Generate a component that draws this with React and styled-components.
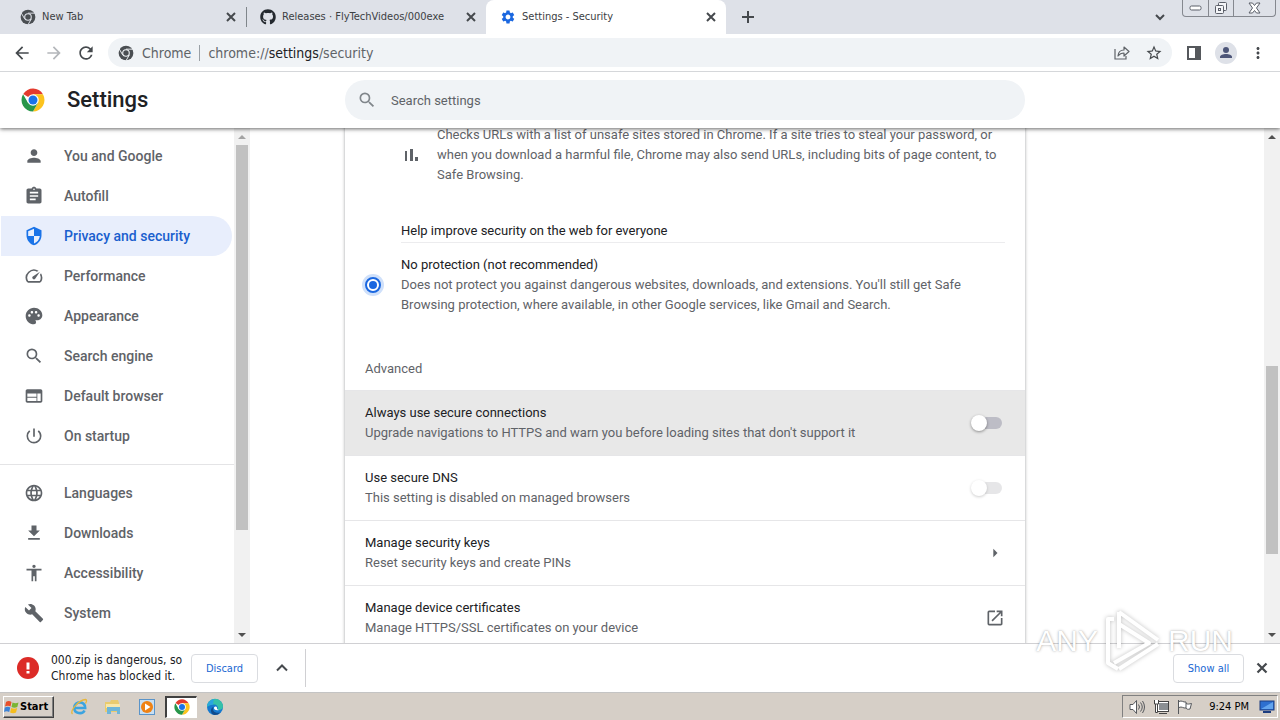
import React from "react";
import styled, { createGlobalStyle, css } from "styled-components";
import {
  MdPerson,
  MdAssignment,
  MdSecurity,
  MdSpeed,
  MdPalette,
  MdSearch,
  MdWeb,
  MdPowerSettingsNew,
  MdLanguage,
  MdFileDownload,
  MdAccessibility,
  MdBuild,
  MdOpenInNew,
  MdArrowRight,
  MdArrowBack,
  MdArrowForward,
  MdRefresh,
  MdMoreVert,
  MdStarBorder,
  MdSettings,
} from "react-icons/md";
import { FaGithub } from "react-icons/fa";

const systemFont = `"DejaVu Sans Condensed", "DejaVu Sans", sans-serif`;

const GlobalStyle = createGlobalStyle`
  * {
    box-sizing: border-box;
  }
  body {
    margin: 0;
    background: #fff;
    font-family: Roboto, "Liberation Sans", sans-serif;
    font-size: 13px;
    line-height: 20px;
    color: #202124;
  }
  button,
  input {
    font-family: inherit;
    margin: 0;
  }
  svg {
    display: block;
    flex-shrink: 0;
  }
`;

const Desktop = styled.div`
  height: 100vh;
  display: flex;
  flex-direction: column;
  overflow: hidden;
  position: relative;
`;

/* tab strip */
const TabStrip = styled.div`
  height: 34px;
  flex-shrink: 0;
  display: flex;
  align-items: center;
  padding-left: 6px;
  background: #dee1e8;
  font-family: ${systemFont};
  font-size: 11px;
  color: #3c4043;
`;
const Tab = styled.div`
  width: 240px;
  height: 34px;
  display: flex;
  align-items: center;
  gap: 6px;
  padding: 0 7px 0 14px;
  background: ${({ $active }) => ($active ? "#fff" : "transparent")};
  border-radius: 8px 8px 0 0;
`;
const TabTitle = styled.span`
  flex: 1;
  white-space: nowrap;
`;
const TabDivider = styled.div`
  width: 1px;
  height: 20px;
  margin-right: -1px;
  background: #80868b;
`;
const IconButton = styled.button`
  width: ${({ $size }) => $size || 16}px;
  height: ${({ $size }) => $size || 16}px;
  flex-shrink: 0;
  display: flex;
  align-items: center;
  justify-content: center;
  padding: 0;
  border: 0;
  background: transparent;
  color: ${({ $color }) => $color || "#45494d"};
`;
const NewTab = styled(IconButton)`
  margin-left: 12px;
`;
const TabSearch = styled(IconButton)`
  margin-left: auto;
  margin-right: 14px;
`;
const WindowControls = styled.div`
  align-self: flex-start;
  display: flex;
  height: 17px;
  margin-right: 4px;
  border: 1px solid #85888f;
  border-top: 0;
  border-radius: 0 0 4px 4px;
`;
const WindowButton = styled.button`
  width: ${({ $wide }) => ($wide ? 42 : 25)}px;
  display: flex;
  align-items: center;
  justify-content: center;
  padding: 0;
  border: 0;
  border-left: ${({ $first }) => ($first ? "0" : "1px solid #85888f")};
  background: transparent;
`;

/* toolbar */
const Toolbar = styled.div`
  height: 38px;
  flex-shrink: 0;
  display: flex;
  align-items: center;
  padding: 0 12px;
  border-bottom: 1px solid #d5d7da;
  font-family: ${systemFont};
`;
const NavButtons = styled.div`
  display: flex;
  gap: 12px;
  margin-right: 12px;
`;
const Omnibox = styled.div`
  flex: 1;
  height: 29px;
  display: flex;
  align-items: center;
  padding: 0 8px 0 10px;
  border-radius: 15px;
  background: #f0f3f6;
  font-size: 14px;
  color: #5f6368;
`;
const SiteChip = styled.span`
  margin-left: 8px;
  padding-right: 8px;
  line-height: 16px;
  border-right: 1px solid #9aa0a6;
`;
const Address = styled.span`
  flex: 1;
  margin-left: 8px;
  b {
    font-weight: 400;
    color: #202124;
  }
`;
const OmniActions = styled.div`
  display: flex;
  gap: 12px;
`;
const ToolbarActions = styled.div`
  display: flex;
  gap: 12px;
  margin-left: 12px;
`;

/* settings page */
const Header = styled.header`
  height: 56px;
  flex-shrink: 0;
  display: flex;
  align-items: center;
  position: relative;
  z-index: 1;
  background: #fff;
  box-shadow: 0 1px 4px rgba(0, 0, 0, 0.6);
  clip-path: inset(0 0 -8px 0);
`;
const Brand = styled.div`
  width: 345px;
  flex-shrink: 0;
  display: flex;
  align-items: center;
  gap: 22px;
  padding-left: 21px;
`;
const PageTitle = styled.h1`
  margin: 0;
  font-size: 22px;
  font-weight: 500;
`;
const SearchBox = styled.label`
  width: 680px;
  height: 40px;
  display: flex;
  align-items: center;
  gap: 14px;
  padding: 0 12px;
  border-radius: 20px;
  background: #f0f3f6;
  color: #80868b;
`;
const SearchInput = styled.input`
  flex: 1;
  padding: 0;
  border: 0;
  background: transparent;
  font-size: 13px;
  &::placeholder {
    color: #5f6368;
  }
`;
const Page = styled.div`
  flex: 1;
  min-height: 0;
  display: flex;
`;
const Sidebar = styled.nav`
  width: 234px;
  flex-shrink: 0;
  padding: 8px 0;
  overflow: hidden;
`;
const MenuLink = styled.a`
  height: 40px;
  display: flex;
  align-items: center;
  gap: 20px;
  margin: 0 2px 0 1px;
  padding-left: 23px;
  border-radius: 0 20px 20px 0;
  font-size: 14px;
  font-weight: 500;
  text-decoration: none;
  color: #5f6368;
  ${({ $selected }) =>
    $selected &&
    css`
      background: #e8eefc;
      color: #1a5fce;
      svg {
        color: #1a73e8;
      }
    `}
`;
const MenuSeparator = styled.div`
  height: 1px;
  margin: 8px 0;
  background: #e4e4e6;
`;
const ScrollColumn = styled.div`
  width: 16px;
  flex-shrink: 0;
  display: flex;
  flex-direction: column;
  align-items: center;
  background: #f1f1f1;
`;
const ScrollArrow = styled.div`
  height: 17px;
  flex-shrink: 0;
  display: flex;
  align-items: center;
`;
const ScrollTrack = styled.div`
  width: 12px;
  flex: 1;
`;
const ScrollThumb = styled.div`
  background: #c1c1c1;
`;
const Main = styled.main`
  flex: 1;
  overflow: hidden;
  padding-left: 95px;
`;
/* the list is scrolled, its top lies under the header */
const Card = styled.section`
  max-width: 680px;
  margin-top: -16px;
  padding-top: 13px;
  box-shadow: 0 0 3px rgba(60, 64, 67, 0.5);
`;
const Muted = styled.p`
  margin: 0;
  color: #5f6368;
`;
const Strong = styled.h3`
  margin: 0;
  font-size: 13px;
  font-weight: 400;
  color: #202124;
`;
const Bullet = styled.div`
  display: flex;
  align-items: center;
  gap: 16px;
  padding: 0 20px 0 56px;
  color: #5f6368;
`;
const HelpImprove = styled.div`
  margin: 36px 20px 0 56px;
  padding-bottom: 1px;
  border-bottom: 1px solid #ececee;
`;
const RadioOption = styled.label`
  display: flex;
  align-items: center;
  gap: 20px;
  margin: 12px 20px 0;
`;
const Radio = styled.input`
  appearance: none;
  width: 16px;
  height: 16px;
  flex-shrink: 0;
  border: 2px solid #1a67e0;
  border-radius: 50%;
  background: #1a67e0;
  background-clip: content-box;
  padding: 2px;
  box-shadow: 0 0 0 3px #cfe0fa;
`;
const SectionTitle = styled.h2`
  margin: 0;
  padding: 44px 20px 11px;
  font-size: 13px;
  font-weight: 400;
  color: #5f6368;
`;
const SettingRow = styled.div`
  min-height: 65px;
  display: flex;
  align-items: center;
  justify-content: space-between;
  padding: 0 20px;
  border-top: 1px solid #e6e6e8;
  background: ${({ $hovered }) => ($hovered ? "#e8e8e8" : "transparent")};
`;
const Toggle = styled.input`
  appearance: none;
  position: relative;
  width: 32px;
  height: 16px;
  margin-right: 3px;
  opacity: ${({ disabled }) => (disabled ? 0.5 : 1)};
  &::before {
    content: "";
    position: absolute;
    inset: 2px 0 2px 4px;
    border-radius: 6px;
    background: ${({ disabled }) => (disabled ? "#cfcfd2" : "#bdbdc6")};
  }
  &::after {
    content: "";
    position: absolute;
    inset: 0 15px 0 1px;
    border-radius: 50%;
    background: #fff;
    box-shadow: 0 1px 3px rgba(0, 0, 0, 0.4);
  }
`;

/* download shelf */
const Shelf = styled.div`
  height: 50px;
  flex-shrink: 0;
  display: flex;
  align-items: center;
  padding: 0 10px 0 17px;
  border-top: 1px solid #d0d0d3;
  border-bottom: 1px solid #c4c4c4;
  background: #fff;
  font-family: ${systemFont};
  font-size: 12px;
  line-height: 16px;
`;
const DangerText = styled.div`
  width: 132px;
  margin: 0 8px 0 12px;
  white-space: nowrap;
`;
const ShelfButton = styled.button`
  width: ${({ $wide }) => ($wide ? 71 : 67)}px;
  height: 29px;
  padding: 0;
  border: 1px solid #dadce0;
  border-radius: 4px;
  background: #fff;
  font-size: 11px;
  color: #1a67d2;
`;
const ShelfMenu = styled(IconButton)`
  margin: 0 15px 0 16px;
`;
const ShelfDivider = styled.div`
  width: 1px;
  height: 38px;
  margin-right: auto;
  background: #d0d0d3;
`;
const ShelfClose = styled(IconButton)`
  margin-left: 10px;
`;

/* taskbar */
const Taskbar = styled.div`
  height: 27px;
  flex-shrink: 0;
  display: flex;
  align-items: center;
  padding: 0 2px 0 3px;
  background: #d6cfc7;
  font-family: ${systemFont};
`;
const StartButton = styled.button`
  width: 51px;
  height: 22px;
  display: flex;
  align-items: center;
  padding: 0;
  border: 1px solid;
  border-color: #fff #404040 #404040 #fff;
  box-shadow: inset -1px -1px 0 #808080;
  background: #d6cfc7;
  font-size: 11px;
  font-weight: 700;
  color: #000;
`;
const QuickLaunch = styled.div`
  display: flex;
  align-items: center;
  margin-left: 8px;
`;
const TaskButton = styled.button`
  width: 34px;
  height: 22px;
  display: flex;
  align-items: center;
  justify-content: center;
  padding: 0;
  border: 1px solid transparent;
  background: transparent;
  ${({ $active }) =>
    $active &&
    css`
      width: 32px;
      margin: 0 1px;
      border-width: 2px 1px 1px 2px;
      border-color: #404040 #fff #fff #404040;
      background: #fff;
    `}
`;
const Tray = styled.div`
  height: 23px;
  display: flex;
  align-items: center;
  gap: 8px;
  margin-left: auto;
  padding: 0 2px 0 6px;
  border: 1px solid;
  border-color: #808080 #fff #fff #808080;
  font-size: 11px;
  color: #000;
`;
const Clock = styled.span`
  margin: 0 2px 0 8px;
`;

const Watermark = styled.div`
  position: absolute;
  z-index: 2;
  right: 47px;
  bottom: 46px;
  display: flex;
  align-items: center;
  gap: 6px;
  pointer-events: none;
  font-family: "Liberation Sans", Roboto, sans-serif;
  font-size: 30px;
  line-height: 66px;
  color: #fff;
  text-shadow: 0 0 3px rgba(0, 0, 0, 0.3), 0 0 1px rgba(0, 0, 0, 0.15);
  svg {
    filter: drop-shadow(0 0 2px rgba(0, 0, 0, 0.25));
  }
`;

const ChromeLogo = ({ size = 16 }) => (
  <svg width={size} height={size} viewBox="0 0 48 48">
    <path d="M24 24 4.500 12A23 23 0 0 1 43.900 12.500H24z" fill="#e33b2e" />
    <path d="M24 12.500H43.900A23 23 0 0 1 24 47L34 29.700z" fill="#fcc31e" />
    <path d="M14 29.700 4.100 12.500A23 23 0 0 0 24 47L34 29.700 24 24z" fill="#27964a" />
    <circle cx="24" cy="24" r="11.500" fill="#fff" />
    <circle cx="24" cy="24" r="9" fill="#1a73e8" />
  </svg>
);

const ChromeMono = ({ gap }) => (
  <svg width="16" height="16" viewBox="-1 -1 50 50">
    <circle cx="24" cy="24" r="23" fill="#4a4e52" />
    <path d="M24 12H47M13.600 30 2 10M34.400 30 23 50" stroke={gap} strokeWidth="3" />
    <circle cx="24" cy="24" r="12" fill={gap} />
    <circle cx="24" cy="24" r="8.500" fill="#4a4e52" />
  </svg>
);

const CloseIcon = ({ size = 16 }) => (
  <svg width={size} height={size} viewBox="0 0 16 16" stroke="currentColor" strokeWidth="2">
    <path d="M4 4l8 8M12 4l-8 8" />
  </svg>
);

const PlusIcon = () => (
  <svg width="20" height="20" viewBox="0 0 20 20" stroke="currentColor" strokeWidth="2">
    <path d="M10 4v12M4 10h12" />
  </svg>
);

const ChevronIcon = ({ up }) => (
  <svg width="16" height="16" viewBox="0 0 16 16" fill="none" stroke="currentColor" strokeWidth="2">
    <path d={up ? "M3 10.500l5-5 5 5" : "M4 6l4 4 4-4"} />
  </svg>
);

const BarsIcon = () => (
  <svg width="20" height="20" viewBox="0 0 20 20" fill="#5f6368">
    <path d="M4 6h2v10H4zM9 4h3v12H9zM14 12h3v4h-3z" />
  </svg>
);

const ShareIcon = () => (
  <svg width="18" height="18" viewBox="0 0 18 18" fill="none" stroke="#5f6368" strokeWidth="1.2">
    <path d="M2 5v10h11v-3" />
    <path d="M5 12c.3-4 2.500-6 6-6V3l5 4.500-5 4.500V9c-3 0-4.500 1-6 3z" strokeLinejoin="round" />
  </svg>
);

const SidePanelIcon = () => (
  <svg width="16" height="16" viewBox="0 0 16 16">
    <path d="M1 1h14v14H1zM3 3v10h6V3z" fill="#55585c" fillRule="evenodd" />
  </svg>
);

const Avatar = () => (
  <svg width="22" height="22" viewBox="0 0 22 22">
    <circle cx="11" cy="11" r="11" fill="#dee1e8" />
    <circle cx="11" cy="8" r="3" fill="#4c5578" />
    <path d="M5 16v-1c0-2 3-3 6-3s6 1 6 3v1z" fill="#4c5578" />
  </svg>
);

const DangerIcon = () => (
  <svg width="22" height="22" viewBox="0 0 22 22">
    <circle cx="11" cy="11" r="11" fill="#dc2b27" />
    <path d="M9.500 5.500h3v7h-3zM9.500 14h3v2.500h-3z" fill="#fff" />
  </svg>
);

const MinimizeIcon = () => (
  <svg width="13" height="6" viewBox="0 0 13 6">
    <rect x="1" y="1" width="11" height="4" rx="1.500" fill="#fff" stroke="#5b5f69" />
  </svg>
);

const RestoreIcon = () => (
  <svg width="14" height="14" viewBox="0 0 14 14" fill="#f4f5f8" stroke="#5b5f69">
    <rect x="4.500" y="1.500" width="8" height="8" rx="1" />
    <rect x="1.500" y="4.500" width="8" height="8" rx="1" />
    <rect x="4.500" y="7.500" width="2" height="2" />
  </svg>
);

const CrossIcon = () => (
  <svg width="13" height="12" viewBox="0 0 13 12">
    <path
      d="M1 1h3.500l2 2.500 2-2.500H12L8.500 6l3.500 5H8.500l-2-2.500-2 2.500H1l3.500-5z"
      fill="#fff"
      stroke="#5b5f69"
      strokeLinejoin="round"
    />
  </svg>
);

const WindowsFlag = () => (
  <svg width="16" height="16" viewBox="0 0 16 16">
    <path d="M2 3c2-1.500 4-1 5.500 0L6.500 7.500C5 6.500 3 6.500 1 7.500z" fill="#e8502a" />
    <path d="M8.500 3.500c2 1 4 1 6 0l-1.200 4.500c-2 1-4 .8-5.800 0z" fill="#7ab533" />
    <path d="M.8 8.500c2-1 4-1 5.500 0L5.200 13c-1.700-1-3.500-1-5.200 0z" fill="#3c83d6" />
    <path d="M7.200 9c2 1 4 1 6 0L12 13.500c-2 1-4 .8-5.900 0z" fill="#f5bd1d" />
  </svg>
);

const ExplorerE = () => (
  <svg width="18" height="18" viewBox="0 0 18 18" fill="none">
    <path
      d="M4.500 10H15.200C15.500 2.500 4.200 2.500 4.200 10c0 6 8.500 6.500 10.300 2.500"
      stroke="#3ba4e0"
      strokeWidth="2.600"
    />
    <path d="M2.500 16C-1 13 9 2 15.500 1.500c2 .5.800 2.500 0 4" stroke="#e8b73a" strokeWidth="1.300" />
  </svg>
);

const FolderIcon = () => (
  <svg width="18" height="18" viewBox="0 0 18 18">
    <path d="M1 4h5l1-2h7l1 3v9H1z" fill="#e9cb6e" />
    <path d="M2 6h14v4H2z" fill="#f8e7a9" />
    <path d="M3 9h13v7h-3v-3H7v3H3z" fill="#6fb6d8" />
  </svg>
);

const MediaIcon = () => (
  <svg width="18" height="18" viewBox="0 0 18 18">
    <rect x="1.500" y="1.500" width="15" height="15" fill="#c8dff2" stroke="#5a94c9" />
    <circle cx="9" cy="9" r="6" fill="#ef8214" />
    <path d="M7 5.500v7L12.500 9z" fill="#fff" />
  </svg>
);

const EdgeIcon = () => (
  <svg width="18" height="18" viewBox="0 0 18 18">
    <circle cx="9" cy="9" r="8" fill="#1679cf" />
    <path
      d="M1 9a8 8 0 0 1 16-.5c0 3-3 4-5.500 3.200C13 8 10 6 7 6.500 4 7 2 8 1 9z"
      fill="#35c1a8"
    />
    <path d="M1 8.500C2 3 6 1 9.500 1 6 2 8 6 7 6.500 4 7 2 7.500 1 8.500z" fill="#2aa6e0" />
    <path d="M7.500 9c-2 3 1 7 7 5.500a8 8 0 0 1-6 2.500C4 16 4 10 7.500 9z" fill="#114a8b" />
    <path d="M8 9.500c1-1.500 3-1 3 .5 0 1 .5 1.700 2 2-3 .8-5.500-.5-5-2.500z" fill="#fff" />
  </svg>
);

const VolumeIcon = () => (
  <svg width="16" height="16" viewBox="0 0 16 16" fill="none" stroke="#55585c">
    <path d="M1 5.500h3l3.500-4v13l-3.500-4H1z" fill="#fff" />
    <path d="M9.500 5.500q2 2.500 0 5M11.500 3.500q3.500 4.500 0 9M13.500 2q4 6 0 12" />
  </svg>
);

const NetworkIcon = () => (
  <svg width="16" height="16" viewBox="0 0 16 16" stroke="#444">
    <rect x="5.500" y="3.500" width="10" height="8" fill="#8b8f93" stroke="#fff" />
    <rect x="4.500" y="2.500" width="11" height="10" fill="none" />
    <path d="M6 14.500h8" />
    <path d="M1.500 1v4h4V1M2.500 5v8.500h2V5" fill="#fff" />
  </svg>
);

const FlagIcon = () => (
  <svg width="16" height="16" viewBox="0 0 16 16" fill="#fff" stroke="#55585c">
    <path d="M1.500 1v14M2 2.500c3-1.500 4 1 7 .5v6c-3 .5-4-2-7-.5M9 4.500c2 1 3 .5 5.500 0L13 10c-2 .5-3 .5-4-1" />
  </svg>
);

const ScreenIcon = () => (
  <svg width="16" height="14" viewBox="0 0 16 14">
    <rect x="1" y="1" width="14" height="9" fill="#2d6fd0" stroke="#1d3d80" />
    <path d="M2 9 14 2v7z" fill="#63a4ee" />
    <path d="M4 12h8" stroke="#1d3d80" strokeWidth="2" />
  </svg>
);

const PlayMark = () => (
  <svg width="58" height="66" viewBox="0 0 58 66" fill="none" stroke="#fff" strokeWidth="4">
    <path d="M15 4 54 32M15 4v36M15 61 54 36" strokeLinejoin="round" />
    <path d="M10 11H4v44l10 6M15 16l30 19L10 55" strokeLinejoin="round" />
  </svg>
);

const Scrollbar = ({ start, length, atTop }) => (
  <ScrollColumn>
    <ScrollArrow>
      <svg width="8" height="4" viewBox="0 0 8 4">
        <path d="M0 4 4 0l4 4z" fill={atTop ? "#a3a3a3" : "#505050"} />
      </svg>
    </ScrollArrow>
    <ScrollTrack>
      <div style={{ height: `${start}%` }} />
      <ScrollThumb style={{ height: `${length}%` }} />
    </ScrollTrack>
    <ScrollArrow>
      <svg width="8" height="4" viewBox="0 0 8 4">
        <path d="M0 0h8L4 4z" fill="#505050" />
      </svg>
    </ScrollArrow>
  </ScrollColumn>
);

const tabs = [
  { title: "New Tab", icon: <ChromeMono gap="#dee1e8" />, divider: true },
  { title: "Releases · FlyTechVideos/000exe", icon: <FaGithub size={16} color="#24292f" /> },
  { title: "Settings - Security", icon: <MdSettings size={16} color="#1a67e0" />, active: true },
];

const basicMenu = [
  { label: "You and Google", Icon: MdPerson },
  { label: "Autofill", Icon: MdAssignment },
  { label: "Privacy and security", Icon: MdSecurity, selected: true },
  { label: "Performance", Icon: MdSpeed },
  { label: "Appearance", Icon: MdPalette },
  { label: "Search engine", Icon: MdSearch },
  { label: "Default browser", Icon: MdWeb },
  { label: "On startup", Icon: MdPowerSettingsNew },
];

const advancedMenu = [
  { label: "Languages", Icon: MdLanguage },
  { label: "Downloads", Icon: MdFileDownload },
  { label: "Accessibility", Icon: MdAccessibility },
  { label: "System", Icon: MdBuild },
];

const settings = [
  {
    id: "https",
    title: "Always use secure connections",
    text: "Upgrade navigations to HTTPS and warn you before loading sites that don't support it",
    hovered: true,
    control: <Toggle type="checkbox" id="https" />,
  },
  {
    id: "dns",
    title: "Use secure DNS",
    text: "This setting is disabled on managed browsers",
    control: <Toggle type="checkbox" id="dns" disabled />,
  },
  {
    id: "keys",
    title: "Manage security keys",
    text: "Reset security keys and create PINs",
    control: (
      <IconButton id="keys" $size={20} $color="#5f6368">
        <MdArrowRight size={20} />
      </IconButton>
    ),
  },
  {
    id: "certs",
    title: "Manage device certificates",
    text: "Manage HTTPS/SSL certificates on your device",
    control: (
      <IconButton id="certs" $size={20} $color="#5f6368">
        <MdOpenInNew size={20} />
      </IconButton>
    ),
  },
];

const Menu = ({ items }) =>
  items.map(({ label, Icon, selected }) => (
    <MenuLink key={label} href="#" $selected={selected}>
      <Icon size={20} />
      {label}
    </MenuLink>
  ));

const App = () => {
  return (
    <Desktop>
      <GlobalStyle />
      <TabStrip>
        {tabs.map((tab) => (
          <React.Fragment key={tab.title}>
            <Tab $active={tab.active}>
              {tab.icon}
              <TabTitle>{tab.title}</TabTitle>
              <IconButton aria-label="Close tab">
                <CloseIcon />
              </IconButton>
            </Tab>
            {tab.divider && <TabDivider />}
          </React.Fragment>
        ))}
        <NewTab $size={20} aria-label="New tab">
          <PlusIcon />
        </NewTab>
        <TabSearch aria-label="Search tabs">
          <ChevronIcon />
        </TabSearch>
        <WindowControls>
          <WindowButton $first aria-label="Minimize">
            <MinimizeIcon />
          </WindowButton>
          <WindowButton aria-label="Restore">
            <RestoreIcon />
          </WindowButton>
          <WindowButton $wide aria-label="Close">
            <CrossIcon />
          </WindowButton>
        </WindowControls>
      </TabStrip>

      <Toolbar>
        <NavButtons>
          <IconButton $size={20} aria-label="Back">
            <MdArrowBack size={20} />
          </IconButton>
          <IconButton $size={20} $color="#b4b7bb" aria-label="Forward">
            <MdArrowForward size={20} />
          </IconButton>
          <IconButton $size={20} aria-label="Reload">
            <MdRefresh size={20} />
          </IconButton>
        </NavButtons>
        <Omnibox>
          <ChromeMono gap="#f0f3f6" />
          <SiteChip>Chrome</SiteChip>
          <Address>
            chrome://<b>settings</b>/security
          </Address>
          <OmniActions>
            <IconButton $size={20} aria-label="Share">
              <ShareIcon />
            </IconButton>
            <IconButton $size={20} aria-label="Bookmark">
              <MdStarBorder size={18} />
            </IconButton>
          </OmniActions>
        </Omnibox>
        <ToolbarActions>
          <IconButton $size={20} aria-label="Side panel">
            <SidePanelIcon />
          </IconButton>
          <IconButton $size={20} aria-label="Profile">
            <Avatar />
          </IconButton>
          <IconButton $size={20} aria-label="Menu">
            <MdMoreVert size={18} />
          </IconButton>
        </ToolbarActions>
      </Toolbar>

      <Header>
        <Brand>
          <ChromeLogo size={24} />
          <PageTitle>Settings</PageTitle>
        </Brand>
        <SearchBox>
          <MdSearch size={20} />
          <SearchInput type="text" placeholder="Search settings" />
        </SearchBox>
      </Header>

      <Page>
        <Sidebar>
          <Menu items={basicMenu} />
          <MenuSeparator />
          <Menu items={advancedMenu} />
        </Sidebar>
        <Scrollbar start={0} length={80} atTop />
        <Main>
          <Card>
            <Bullet>
              <BarsIcon />
              <Muted>
                Checks URLs with a list of unsafe sites stored in Chrome. If a site tries to steal
                your password, or when you download a harmful file, Chrome may also send URLs,
                including bits of page content, to Safe Browsing.
              </Muted>
            </Bullet>
            <HelpImprove>
              <Strong>Help improve security on the web for everyone</Strong>
            </HelpImprove>
            <RadioOption>
              <Radio type="radio" name="protection" defaultChecked />
              <div>
                <Strong>No protection (not recommended)</Strong>
                <Muted>
                  Does not protect you against dangerous websites, downloads, and extensions. You'll
                  still get Safe Browsing protection, where available, in other Google services,
                  like Gmail and Search.
                </Muted>
              </div>
            </RadioOption>
            <SectionTitle>Advanced</SectionTitle>
            {settings.map(({ id, title, text, hovered, control }) => (
              <SettingRow key={id} $hovered={hovered}>
                <label htmlFor={id}>
                  <Strong>{title}</Strong>
                  <Muted>{text}</Muted>
                </label>
                {control}
              </SettingRow>
            ))}
          </Card>
        </Main>
        <Scrollbar start={46} length={39} />
      </Page>

      <Shelf>
        <DangerIcon />
        <DangerText>
          000.zip is dangerous, so
          <br />
          Chrome has blocked it.
        </DangerText>
        <ShelfButton>Discard</ShelfButton>
        <ShelfMenu aria-label="More">
          <ChevronIcon up />
        </ShelfMenu>
        <ShelfDivider />
        <ShelfButton $wide>Show all</ShelfButton>
        <ShelfClose aria-label="Close downloads">
          <CloseIcon size={18} />
        </ShelfClose>
      </Shelf>

      <Taskbar>
        <StartButton>
          <WindowsFlag />
          Start
        </StartButton>
        <QuickLaunch>
          <TaskButton aria-label="Internet Explorer">
            <ExplorerE />
          </TaskButton>
          <TaskButton aria-label="Files">
            <FolderIcon />
          </TaskButton>
          <TaskButton aria-label="Media player">
            <MediaIcon />
          </TaskButton>
          <TaskButton $active aria-label="Chrome">
            <ChromeLogo size={16} />
          </TaskButton>
          <TaskButton aria-label="Edge">
            <EdgeIcon />
          </TaskButton>
        </QuickLaunch>
        <Tray>
          <VolumeIcon />
          <NetworkIcon />
          <FlagIcon />
          <Clock>9:24 PM</Clock>
          <ScreenIcon />
        </Tray>
      </Taskbar>

      <Watermark>
        ANY
        <PlayMark />
        RUN
      </Watermark>
    </Desktop>
  );
};

export default App;
